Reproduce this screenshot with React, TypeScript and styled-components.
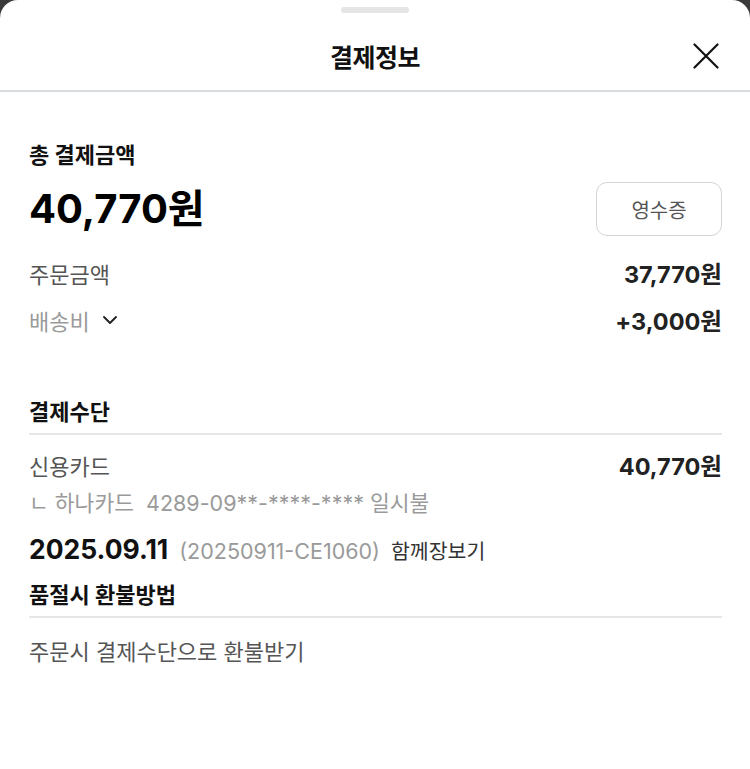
import React from 'react'
import styled, { createGlobalStyle } from 'styled-components'

const Global = createGlobalStyle`
  html, body {
    margin: 0;
    padding: 0;
    background: #3a3a3a;
    font-family: Inter, "Noto Sans CJK KR", sans-serif;
  }
`

const App = () => {
  return (
    <>
      <Global />
      <Sheet>
        <Handle />
        <Header>
          <Title>결제정보</Title>
          <Close aria-label="닫기">
            <svg width="26" height="26" viewBox="0 0 26 26" fill="none" stroke="#111" strokeWidth="2.2" strokeLinecap="round">
              <path d="M1.5 1.5L24.5 24.5M24.5 1.5L1.5 24.5" />
            </svg>
          </Close>
        </Header>

        <Body>
          <Section>
            <Label>총 결제금액</Label>
            <TotalRow>
              <Total>40,770원</Total>
              <Receipt>영수증</Receipt>
            </TotalRow>
            <Row gap={21}>
              <Key>주문금액</Key>
              <Value>37,770원</Value>
            </Row>
            <Row gap={15}>
              <Key light>
                배송비
                <svg width="16" height="16" viewBox="0 0 16 16" fill="none" stroke="#222" strokeWidth="1.9" strokeLinecap="round" strokeLinejoin="round">
                  <path d="M2 5L8 11L14 5" />
                </svg>
              </Key>
              <Value>+3,000원</Value>
            </Row>
          </Section>

          <Section top={61}>
            <Heading>결제수단</Heading>
            <Row gap={14}>
              <Key>신용카드</Key>
              <Value>40,770원</Value>
            </Row>
            <Sub>ㄴ 하나카드&nbsp; 4289-09**-****-**** 일시불</Sub>
            <DateLine>
              <DateText>2025.09.11</DateText>
              <OrderNo>(20250911-CE1060)</OrderNo>
              <Shop>함께장보기</Shop>
            </DateLine>
          </Section>

          <Section top={14}>
            <Heading>품절시 환불방법</Heading>
            <Row gap={16}>
              <Key>주문시 결제수단으로 환불받기</Key>
            </Row>
          </Section>
        </Body>
      </Sheet>
    </>
  )
}

export default App

const Sheet = styled.div`
  width: 100%;
  min-height: 769px;
  background: #fff;
  border-radius: 18px 18px 0 0;
  display: flex;
  flex-direction: column;
`

const Handle = styled.div`
  width: 68px;
  height: 6px;
  border-radius: 3px;
  background: #e5e5e5;
  margin: 7px auto 0;
`

const Header = styled.div`
  position: relative;
  box-sizing: border-box;
  height: 77px;
  margin-top: 2px;
  padding-top: 7px;
  display: flex;
  align-items: center;
  justify-content: center;
  border-bottom: 2px solid #d8dcdf;
`

const Title = styled.h1`
  margin: 0;
  font-size: 25px;
  font-weight: 700;
  color: #111;
  letter-spacing: -0.5px;
`

const Close = styled.button`
  position: absolute;
  right: 31px;
  top: 28px;
  width: 26px;
  height: 26px;
  padding: 0;
  border: none;
  background: none;
  cursor: pointer;
  display: flex;
`

const Body = styled.div`
  padding: 48px 28px 0 29px;
  display: flex;
  flex-direction: column;
`

const Section = styled.div<{ top?: number }>`
  display: flex;
  flex-direction: column;
  margin-top: ${p => p.top || 0}px;
`

const Label = styled.div`
  font-size: 22px;
  font-weight: 700;
  color: #111;
  line-height: 30px;
`

const TotalRow = styled.div`
  display: flex;
  justify-content: space-between;
  align-items: center;
  margin-top: 12px;
`

const Total = styled.div`
  font-size: 40px;
  line-height: 54px;
  font-weight: 700;
  color: #000;
`

const Receipt = styled.button`
  width: 126px;
  height: 54px;
  border: 1.5px solid #d4d4d4;
  border-radius: 11px;
  background: #fff;
  font-family: inherit;
  font-size: 20px;
  color: #555;
  cursor: pointer;
`

const Row = styled.div<{ gap: number }>`
  display: flex;
  justify-content: space-between;
  align-items: center;
  height: 32px;
  margin-top: ${p => p.gap}px;
`

const Key = styled.div<{ light?: boolean }>`
  font-size: 22px;
  color: ${p => (p.light ? '#9a9a9a' : '#555')};
  display: flex;
  align-items: center;
  gap: 12px;
`

const Value = styled.div`
  font-size: 23.5px;
  font-weight: 700;
  color: #222;
`

const Heading = styled.div`
  font-size: 22px;
  font-weight: 700;
  color: #111;
  line-height: 30px;
  padding-bottom: 6px;
  border-bottom: 2px solid #e6e6e6;
`

const Sub = styled.div`
  font-size: 21.5px;
  line-height: 32px;
  color: #9a9a9a;
  margin-top: 6px;
`

const DateLine = styled.div`
  display: flex;
  align-items: baseline;
  gap: 11px;
  height: 34px;
  margin-top: 13px;
`

const DateText = styled.span`
  font-size: 26.5px;
  line-height: 34px;
  font-weight: 700;
  color: #111;
`

const OrderNo = styled.span`
  font-size: 21.5px;
  color: #9a9a9a;
`

const Shop = styled.span`
  font-size: 20.5px;
  color: #333;
`
